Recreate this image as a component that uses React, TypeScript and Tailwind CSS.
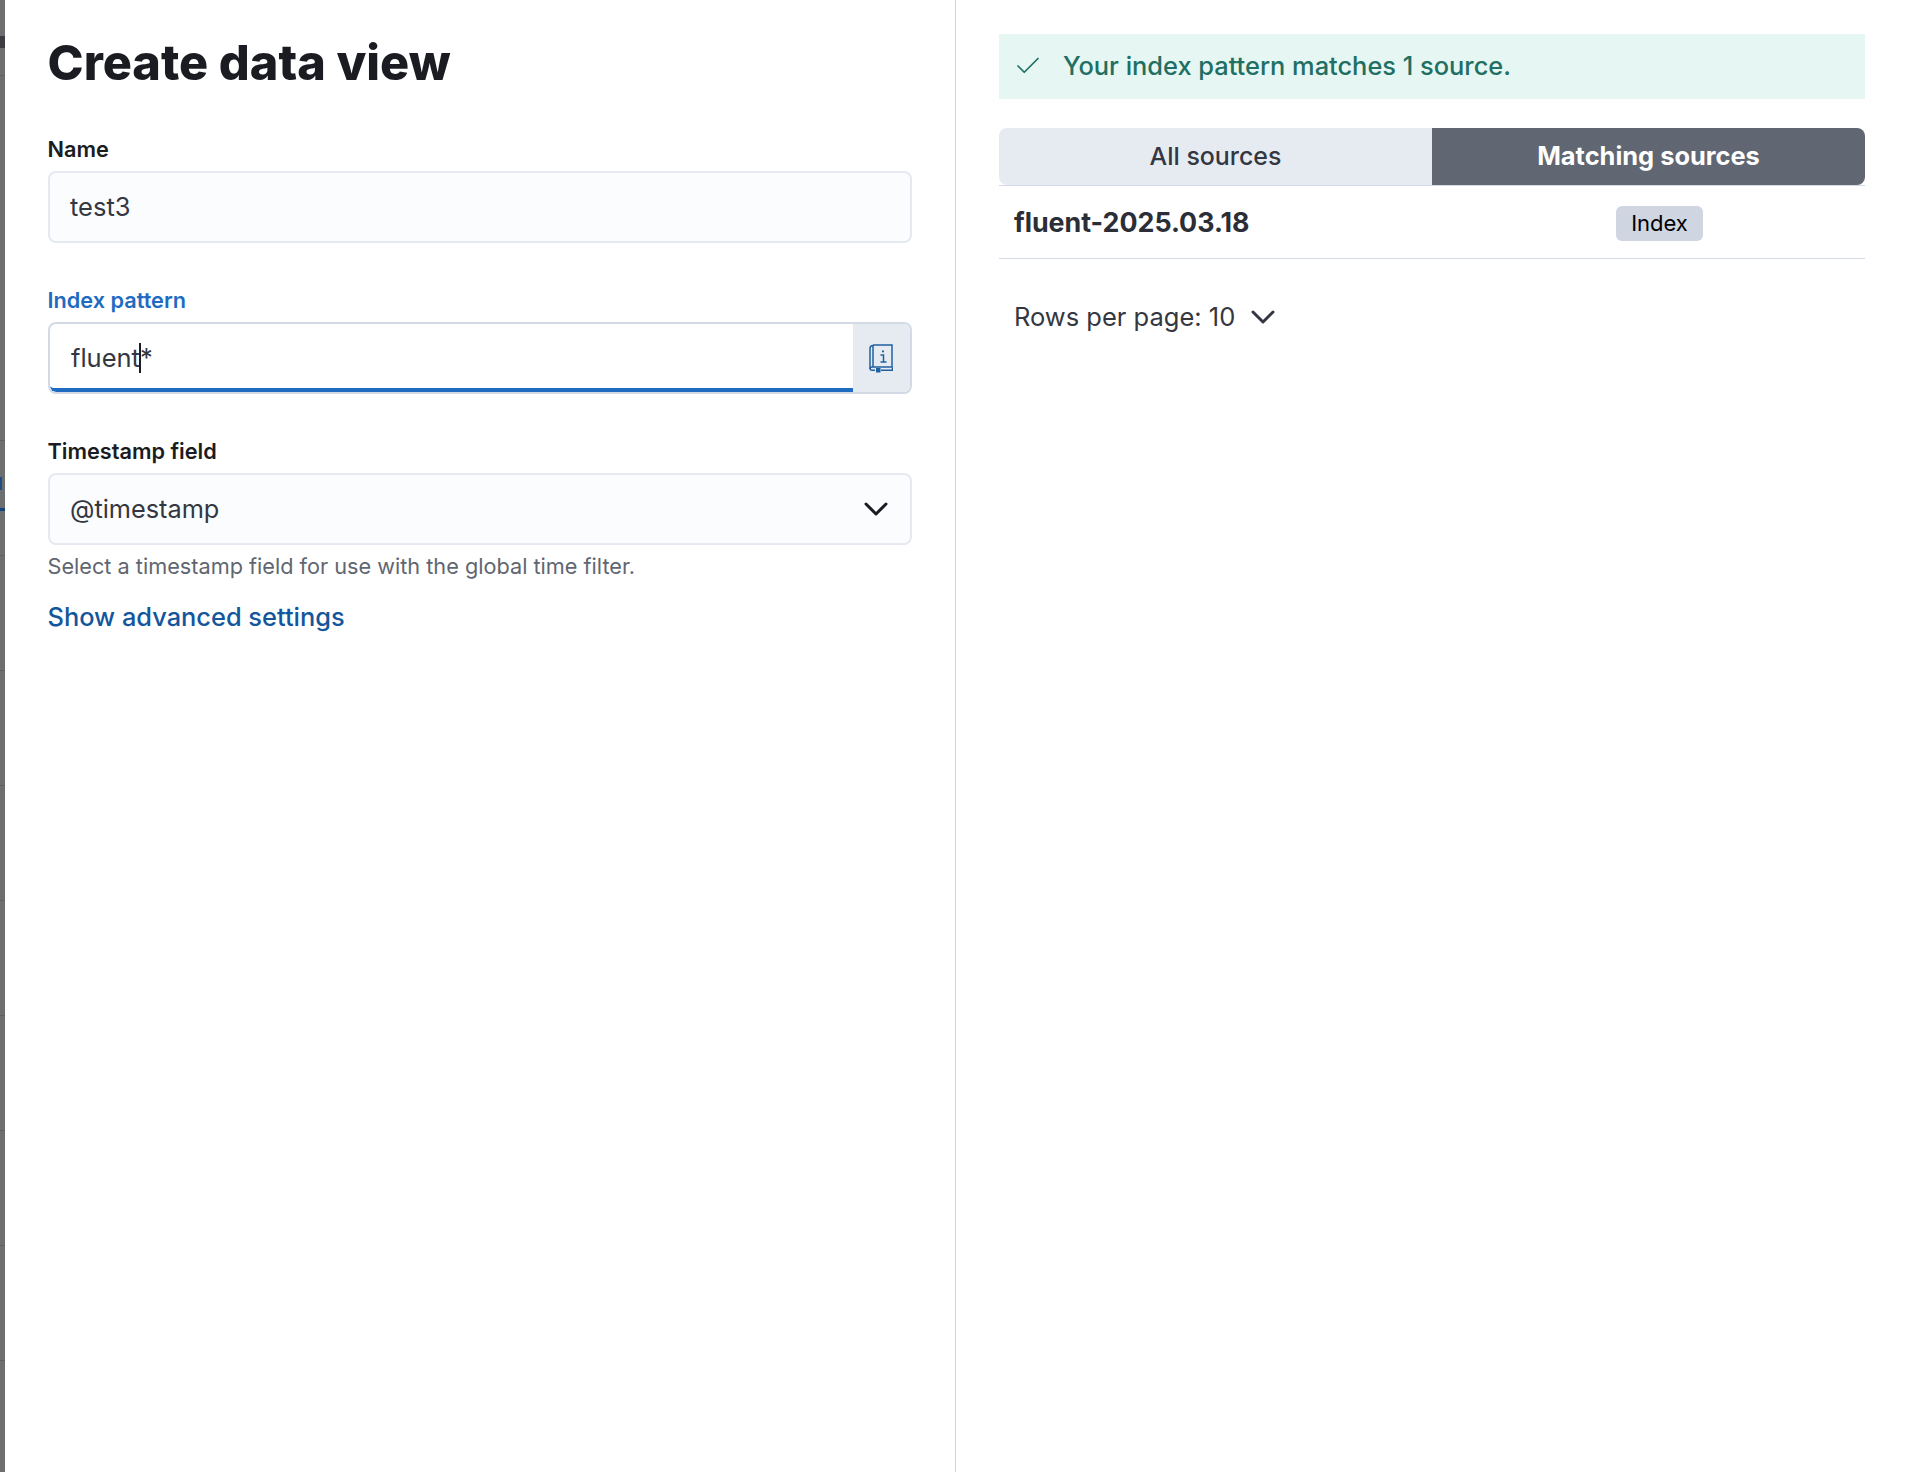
import { Check, ChevronDown } from "lucide-react";

function Label({ children, active }: { children: string; active?: boolean }) {
  return (
    <div className={active ? "-ml-[0.5px] h-[20px] text-[21.7px] leading-[20px] font-semibold text-[#1f6bc2]" : "-ml-[0.5px] h-[20px] text-[21.7px] leading-[20px] font-semibold text-[#1a1c21]"}>
      {children}
    </div>
  );
}

function BookIcon() {
  return (
    <svg width="24" height="29" viewBox="0 0 24 29" fill="none" stroke="#20609f" strokeWidth="1.5" className="-ml-[2px]">
      <path d="M4 1h19v22H3" />
      <path d="M4 1v22" />
      <path d="M4 1.5C2 1.5 1 3 1 4.5v20c0 1 .7 1.7 1.7 1.7h3.3" />
      <path d="M1 25c0-1.2 1-2 2-2" />
      <path d="M12 26.2h11.5v-3" />
      <rect x="7" y="24" width="4.5" height="4.5" fill="#20609f" stroke="none" />
      <rect x="13" y="6.5" width="2" height="1.8" fill="#20609f" stroke="none" />
      <path d="M11.5 11h3v7M11.5 18h6" />
    </svg>
  );
}

// what shows of the page behind the flyout
function BackdropStrip() {
  const rows = [0, 1, 2, 3, 4, 5, 6, 7];
  return (
    <div className="relative w-[5px] shrink-0 bg-[#6d6e70] flex flex-col">
      <div className="absolute left-0 top-[36px] w-[5px] h-[12px] bg-[#3b3d42]" />
      <div className="absolute left-0 top-[477px] w-[2px] h-[13px] bg-[#1d4f80]" />
      <div className="absolute left-0 top-[508px] w-[5px] h-[3px] bg-[#13457a]" />
      <div className="h-[76px] border-b border-[#5f6062]" />
      <div className="h-[365px] border-b border-[#5f6062]" />
      {rows.map((r) => (
        <div key={r} className="h-[115px] border-b border-[#5f6062]" />
      ))}
    </div>
  );
}

export default function App() {
  return (
    <div className="w-[1910px] h-[1472px] flex overflow-hidden bg-white font-['Inter',sans-serif] text-[#1a1c21]">
      <BackdropStrip />

      {/* left form */}
      <div className="w-[951px] shrink-0 border-r border-[#cdd3e2] pt-[33px] pl-[43px] pr-[43px]">
        <h1 className="-ml-[0.5px] text-[48.6px] leading-[60px] font-extrabold text-[#1a1c21]">Create data view</h1>

        <div className="mt-[46px]">
          <Label>Name</Label>
          <div className="mt-[12px] h-[72px] rounded-[8px] border-2 border-[#e6e9f2] bg-[#fbfcfd] flex items-center pl-[20px] text-[25.5px] text-[#343741]">test3</div>
        </div>

        <div className="mt-[47px]">
          <Label active>Index pattern</Label>
          <div className="relative mt-[12px] h-[72px] rounded-[8px] border-2 border-[#d3dae6] bg-white flex overflow-hidden">
            <div className="flex-1 flex items-center pl-[21px] pt-[4px] text-[25.5px] text-[#343741] border-b-[4px] border-[#1f6bc2] rounded-bl-[6px]">
              <span>fluent</span>
              <span className="w-[2px] h-[30px] bg-[#1a1c21] -mx-[1px]" />
              <span>*</span>
            </div>
            <div className="w-[57px] bg-[#e6ebf2] flex items-center justify-center">
              <BookIcon />
            </div>
          </div>
        </div>

        <div className="mt-[47px]">
          <Label>Timestamp field</Label>
          <div className="mt-[12px] h-[72px] rounded-[8px] border-2 border-[#e6e9f2] bg-[#fbfcfd] flex items-center justify-between pl-[20px] pr-[14px] text-[25.3px] text-[#343741]">
            <span>@timestamp</span>
            <ChevronDown size={40} strokeWidth={1.8} className="text-[#1a1c21]" />
          </div>
          <div className="-ml-[0.5px] mt-[8px] text-[21.7px] leading-[26px] text-[#5f6671]">Select a timestamp field for use with the global time filter.</div>
        </div>

        <div className="-ml-[0.5px] mt-[20px] text-[25.4px] leading-[36px] font-medium text-[#13569c]">Show advanced settings</div>
      </div>

      {/* right panel */}
      <div className="flex-1 pt-[34px] pl-[43px] pr-[45px]">
        <div className="h-[65px] bg-[#e6f6f3] flex items-center pl-[14px] text-[25.4px] font-medium text-[#216e63] pb-[1px]">
          <Check size={30} strokeWidth={1.4} />
          <span className="ml-[20px]">Your index pattern matches 1 source.</span>
        </div>

        <div className="mt-[29px] flex h-[57px] rounded-[8px] overflow-hidden">
          <div className="w-[433px] bg-[#e6ebf2] flex items-center justify-center text-[24.9px] font-medium text-[#343741]">All sources</div>
          <div className="flex-1 bg-[#606672] flex items-center justify-center text-[25.4px] font-bold text-white">Matching sources</div>
        </div>

        <div className="h-[74px] border-t border-b border-[#d3dae6] flex items-center pl-[15px] pt-[2px]">
          <span className="w-[602px] text-[26.8px] font-bold text-[#2b2e36] pb-[2px]">fluent-2025.03.18</span>
          <span className="h-[35px] w-[87px] rounded-[6px] bg-[#cfd5e1] flex items-center justify-center text-[22px] text-black">Index</span>
        </div>

        <div className="mt-[43px] pl-[15px] h-[30px] flex items-center text-[25.5px] text-[#343741]">
          <span>Rows per page: 10</span>
          <ChevronDown size={40} strokeWidth={1.8} className="ml-[8px]" />
        </div>
      </div>
    </div>
  );
}
